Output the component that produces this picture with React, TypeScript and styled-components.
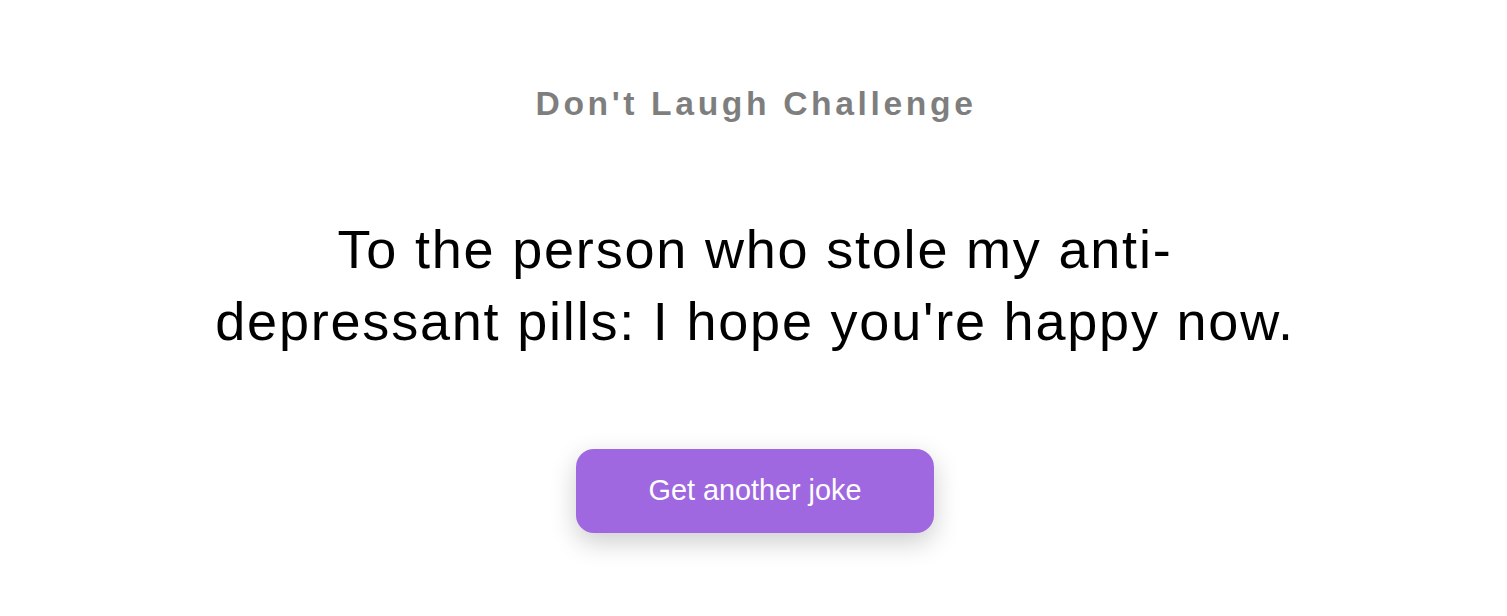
import React from "react";
import styled, { createGlobalStyle } from "styled-components";

const GlobalStyle = createGlobalStyle`
  * { box-sizing: border-box; }
  html, body { margin: 0; padding: 0; background: #ffffff; }
  body { font-family: "Liberation Sans", Arial, sans-serif; overflow: hidden; }
`;

const Page = styled.main`
  display: flex;
  flex-direction: column;
  align-items: center;
  height: 616px;
  padding: 84px 0 0 3px;
  text-align: center;
`;

const Title = styled.h3`
  margin: 0;
  padding-left: 2px;
  font-size: 33.7px;
  line-height: 38.75px;
  font-weight: 700;
  letter-spacing: 3.6px;
  color: #000;
  opacity: 0.5;
`;

const Joke = styled.div`
  margin: 90px auto;
  max-width: 1085px;
  font-size: 54px;
  line-height: 72px;
  letter-spacing: 1.8px;
  color: #000;
`;

const Button = styled.button`
  display: inline-block;
  margin-top: 2px;
  padding: 25px 72.5px 26px;
  border: 0;
  border-radius: 18px;
  background: #9f68e0;
  color: #fff;
  font-family: "Liberation Sans", Arial, sans-serif;
  font-size: 28.8px;
  line-height: 33px;
  box-shadow: 0 9px 27px rgba(0, 0, 0, 0.2);
  cursor: pointer;
`;

export default function App() {
  return (
    <>
      <GlobalStyle />
      <Page>
        <Title>Don't Laugh Challenge</Title>
        <Joke>
          To the person who stole my anti-depressant pills: I hope you're happy now.
        </Joke>
        <Button>Get another joke</Button>
      </Page>
    </>
  );
}
